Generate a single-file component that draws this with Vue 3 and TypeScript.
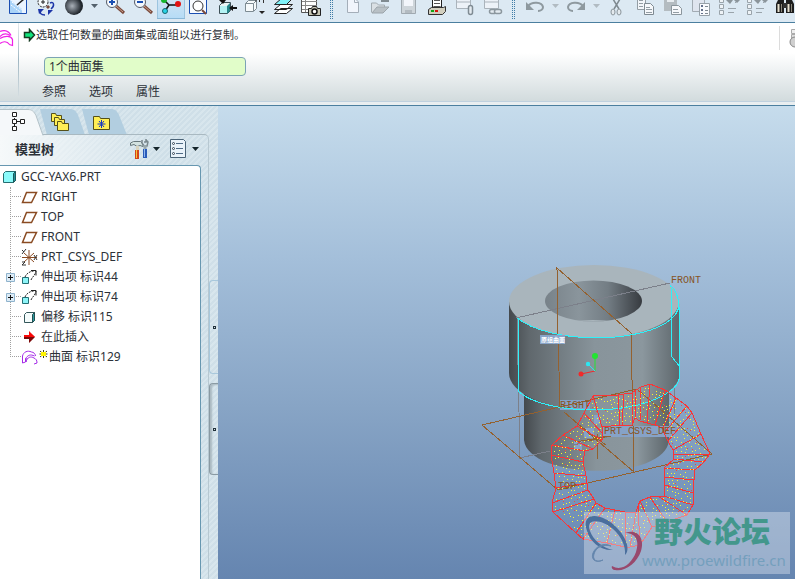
<script setup lang="ts">
import { ref } from 'vue'

type Kind = 'button' | 'arrow' | 'grip'
interface Tool { kind: Kind; label?: string; art?: string; active?: boolean; off?: boolean }

const lens = (x: number) =>
  `<path d="M${x + 4} 6l8 7" stroke="#7a4a3c" stroke-width="3"/><path d="M${x + 4} 6l7 6" stroke="#c9a08c"/><circle cx="${x}" cy="2" r="5.5" fill="#f4f8fc" stroke="#555b66"/>`
const listArt =
  '<g fill="#eef3f7" stroke="#9aa4ab"><path d="M4.500-1.500h4v4h-4zM4.500 4.500h4v4h-4zM4.500 10.500h4v4h-4z"/></g><path d="M13 8.500h8M13 12.500h6M14 3l3-3M20 3l3-3" stroke="#9aa4ab"/><path d="M11 0h7l-3 4zM19 0h6l-3 3z" fill="#8b959b"/>'

const tools: Tool[] = [
  { kind: 'button', label: 'Sketch', art: '<path d="M5.500-4V13.500h17V-4" fill="#eaf4ff" stroke="#1b4fb2"/><path d="M6 0l12 9v4H6z" fill="#a9d3f8"/><path d="M7 5l9 7M8 2l10 8" stroke="#fff" stroke-dasharray="2 1"/><path d="M13 5l7-6" stroke="#222" stroke-width="1.500"/>' },
  { kind: 'button', label: 'Spin', art: '<circle cx="11" cy="2" r="5" fill="#f6fafc" stroke="#222" stroke-dasharray="2 1"/><path d="M15 6l2 2" stroke="#7a4a3c" stroke-width="3"/><path d="M18 3c4-2 5 3 1 6M9 10c-2 3 0 5 4 5" fill="none" stroke="#1d35a8" stroke-width="1.500"/><path d="M16 10h5l-5 5zM6 9h6l-5 5z" fill="#1d35a8"/><path d="M11 0v4M9 2h4" stroke="#222"/>' },
  { kind: 'button', label: 'Shading', art: '<defs><radialGradient id="ball" cx=".4" cy=".5"><stop offset="0" stop-color="#aab1b9"/><stop offset=".5" stop-color="#666d75"/><stop offset="1" stop-color="#22282e"/></radialGradient></defs><circle cx="14" cy="6" r="9" fill="url(#ball)"/>' },
  { kind: 'arrow', label: 'Shading options' },
  { kind: 'button', label: 'Zoom in', art: lens(11) + '<path d="M8 2h6M11-1v6" stroke="#1b4fb2" stroke-width="2"/>' },
  { kind: 'button', label: 'Zoom out', art: lens(11) + '<path d="M8 2h6" stroke="#1b4fb2" stroke-width="2"/>' },
  { kind: 'button', label: 'Datum display', active: true, art: '<path d="M7 0l5 5h9M12 5l-4 6" fill="none" stroke="#111" stroke-width="1.500"/><circle cx="7" cy="0" r="3" fill="#16b52b"/><circle cx="21" cy="4" r="3" fill="#e31212"/><circle cx="8" cy="11" r="2.500" fill="#28d3e6" stroke="#17646e"/>' },
  { kind: 'button', label: 'Refit', art: '<path d="M4.500-4V13.500h17V-4" fill="#f8fbff" stroke="#1b4fb2"/><path d="M17 10l4 4" stroke="#7a4a3c" stroke-width="2"/><circle cx="13" cy="6" r="5" fill="#fff" stroke="#333"/>' },
  { kind: 'button', label: 'Reorient', art: '<path d="M6.500 5.500l3-3h8v8l-3 3h-8z" fill="#e9f6f6" stroke="#3d5057"/><path d="M7 6h7v7H7z" fill="#b4f3f4"/><path d="M14 6v8l3-3V3z" fill="#25878b"/><path d="M24 8h-6M9 1V-3" stroke="#111" stroke-width="2"/><path d="M16 8l4-3v6zM6 0h7l-3 4z" fill="#111"/>' },
  { kind: 'button', label: 'Saved views', art: '<path d="M4.500 11.500v-8l3-3h8v8l-3 3z" fill="#f6fafb" stroke="#7d8b92"/><path d="M12.500 11V3.500h-8M12.500 3.500l3-3" stroke="#7d8b92"/><path d="M15 1.500V-1M18.500 2v-4M22.500 3v-4" stroke="#333"/><path d="M18 11h6l-3 3z" fill="#222"/>' },
  { kind: 'button', label: 'Layers', art: '<path d="M5.500 13.500l6-5h12l-6 5zM5.500 9.500l6-5h12l-6 5z" fill="#fff" stroke="#222"/><path d="M5.500 4.500l7-6h11l-6 6z" fill="#80f4fb" stroke="#222"/>' },
  { kind: 'button', label: 'View manager', art: '<path d="M4.500-4V12.500h15V-4" fill="#fff" stroke="#555"/><path d="M5 1.500h15M5 5.500h15M5 9.500h15M8.500-2v14" stroke="#888"/><path d="M11.500 8.500h3l1-2h4l1 2h3v7h-12z" fill="#c7c6b4" stroke="#222"/><circle cx="17.500" cy="11.500" r="2.500" fill="#fff" stroke="#111" stroke-width="1.500"/>' },
  { kind: 'grip' },
  { kind: 'button', label: 'New', off: true, art: '<path d="M8.500-4V12.500h11V2l-4-4z" fill="#f1f5fc" stroke="#a4aeb9"/><path d="M15.500-1v3.500h4" fill="none" stroke="#a4aeb9"/>' },
  { kind: 'button', label: 'Open', off: true, art: '<path d="M4.500 12.500V3h5l2 2h6v3" fill="#dae0e4" stroke="#a2abb1"/><path d="M5 13l5-6h12l-6 6z" fill="#b8c0c5" stroke="#9ca5ab"/><path d="M14 1h7v-4" fill="none" stroke="#7f8a90" stroke-width="2"/>' },
  { kind: 'button', label: 'Save', off: true, art: '<path d="M6.500-4V13.500h14V-4" fill="#ced5da" stroke="#a0a9b0"/><path d="M9-2h9v8H9z" fill="#f3f6fb"/><path d="M10 10h7v3h-7z" fill="#b3bbc1"/>' },
  { kind: 'button', label: 'Print', art: '<path d="M9.500-3V7h9V-3" fill="#fff" stroke="#222"/><path d="M11 .5h6M11 3.500h6M11 6.500h6" stroke="#555"/><path d="M5.500 9.500l3-2h12l2-1v5l-3 3h-14z" fill="#d2cfbf" stroke="#333"/><path d="M8 10h3v2H8z" fill="#13a413"/><path d="M12 10h3v2h-3z" fill="#d3150e"/>' },
  { kind: 'button', label: 'Attach', off: true, art: '<path d="M5.500-3V8.500h14V-3M6 2h13" fill="#edf2f8" stroke="#aab3bb"/><rect x="17.500" y="5.500" width="4" height="9" rx="2" fill="#e4ebf0" stroke="#7f8b93" stroke-width="1.500"/>' },
  { kind: 'button', label: 'Link', off: true, art: '<path d="M5.500-3V8.500h14V-3M6 2h13" fill="#edf2f8" stroke="#aab3bb"/><g fill="#e4ebf0" stroke="#8c979e" stroke-width="1.500"><rect x="10.500" y="9.500" width="7" height="4" rx="2"/><rect x="15.500" y="9.500" width="7" height="4" rx="2"/></g>' },
  { kind: 'grip' },
  { kind: 'button', label: 'Undo', off: true, art: '<path d="M7 6c4-5 14-4 15 1 0 2-2 4-5 4" fill="none" stroke="#8e999f" stroke-width="2"/><path d="M5 2v8h8z" fill="#8e999f"/>' },
  { kind: 'arrow', label: 'Undo list', off: true },
  { kind: 'button', label: 'Redo', off: true, art: '<path d="M21 6C17 1 7 2 6 7c0 2 2 4 5 4" fill="none" stroke="#8e999f" stroke-width="2"/><path d="M23 2v8h-8z" fill="#8e999f"/>' },
  { kind: 'arrow', label: 'Redo list', off: true },
  { kind: 'button', label: 'Cut', off: true, art: '<path d="M10-1l6 10M17-1l-6 10" stroke="#7e898f" stroke-width="1.500"/><ellipse cx="10" cy="12" rx="2" ry="3" fill="#e4eaee" stroke="#8b959b"/><ellipse cx="16" cy="12" rx="2" ry="3" fill="#e4eaee" stroke="#8b959b"/>' },
  { kind: 'button', label: 'Copy', off: true, art: '<path d="M6.500-3V9.500h8V-3z" fill="#f3f6fa" stroke="#939da4"/><path d="M8 .5h4M8 3.500h4M8 6.500h4" stroke="#939da4"/><path d="M13.500 3.500h6l3 3v8h-9z" fill="#f6f8fb" stroke="#7f8a92"/><path d="M15 7.500h4M15 9.500h6M15 12.500h6" stroke="#939da4"/>' },
  { kind: 'button', label: 'Paste', off: true, art: '<path d="M5-4h13v15H5z" fill="#b4bcc1"/><path d="M8-1h7v3H8z" fill="#e7ecf0"/><path d="M12.500 5.500h7l3 3v6h-10z" fill="#f6f8fb" stroke="#8b969d"/><path d="M14 9.500h5M14 12.500h6" stroke="#939da4"/>' },
  { kind: 'button', label: 'Paste special', off: true, art: '<path d="M5.500-4v15.500h12V-4z" fill="#dfe5ef" stroke="#a2abb3"/><path d="M12.500 3.500h10v12h-10z" fill="#f8fafd" stroke="#96a0a8"/><path d="M14 5h2v2h-2zM14 9h2v2h-2zM14 13h2v1h-2z" fill="#63708b"/><path d="M18 6.500h3M18 10.500h3M18 13.500h3" stroke="#7f8a92"/>' },
  { kind: 'button', label: 'Regenerate', off: true, art: listArt },
  { kind: 'button', label: 'Regenerate manager', off: true, art: listArt },
  { kind: 'button', label: 'Find', art: '<path d="M5 4l3-6h5v15H5zM15-2h5l3 6v9h-8z" fill="#1e1e1e"/><path d="M12 3h4v5h-4z" fill="#333"/><path d="M7.500 4v8M17.500 4v8" stroke="#e7e1cf" stroke-width="2"/><path d="M10.500 4v8M20.500 4v8" stroke="#8b877a"/>' },
]

const iconArt: Record<string, string> = {
  plane: '<path d="M5.500 3.500h10l-5 10h-9z" fill="none" stroke="#8a4b22" stroke-width="1.500"/>',
  csys: '<path d="M8 1v15M1 8.500h15M3 4l10 9M13 4L3 13" stroke="#8a4b22"/><path d="M1 1l2 2M5 0L1 5M1 13h3l-3 3h4M13 6l3 5M16 6l-3 5" stroke="#333" fill="none"/>',
  extrude: '<path d="M4 8c1-3 5-6 9-6M10 11c1-3 4-4 5-9" fill="none" stroke="#222" stroke-dasharray="2 1"/><path d="M10 1.500h5v5" fill="none" stroke="#222"/><path d="M1.500 8.500h6v6h-6z" fill="#8df4f7" stroke="#246f74"/>',
  offset: '<path d="M3.500 5.500l2-2h8v8l-2 2h-8z" fill="#f4fbfb" stroke="#34575a"/><path d="M11.500 5.500v8l2-2v-8z" fill="#2c9b9f" stroke="#234e50"/>',
  insert: '<path d="M3 7h5V3l6 5-6 6v-4H3z" fill="#7c0808"/><path d="M3 6h5V2l6 6H3z" fill="#fa0808"/>',
  surface: '<path d="M1.500 14V7c1-4 5-6 9-4 2 0 4 2 4 4M5 13C6 8 10 7 13 9c2 1 3 2 3 5l-3 1M1.500 14l3-1v-3c2-4 5-5 9-3M5 13V9" fill="none" stroke="#a52ae8"/>',
}

interface Node { name: string; icon: string; expand?: boolean; fresh?: boolean }
const nodes: Node[] = [
  { name: 'RIGHT', icon: 'plane' },
  { name: 'TOP', icon: 'plane' },
  { name: 'FRONT', icon: 'plane' },
  { name: 'PRT_CSYS_DEF', icon: 'csys' },
  { name: '伸出项 标识44', icon: 'extrude', expand: true },
  { name: '伸出项 标识74', icon: 'extrude', expand: true },
  { name: '偏移 标识115', icon: 'offset' },
  { name: '在此插入', icon: 'insert' },
  { name: '曲面 标识129', icon: 'surface', fresh: true },
]

const picked = ref('1个曲面集')

// Each entry joins a point of the outer contour to one of the inner contour.
const ribs: [number, number, number, number][] = [
  [593, 396, 602, 427], [618, 395, 620, 425], [624, 394, 622, 425],
  [632, 393, 632, 425], [636, 390, 635, 418], [641, 387, 640, 421], [650, 384, 647, 423],
  [665, 390, 655, 425], [676, 398, 663, 428], [687, 406, 664, 433],
  [692, 413, 668, 441], [701, 434, 673, 450], [710, 454, 673, 454], [704, 462, 674, 459],
  [695, 470, 664, 468], [694, 480, 664, 477], [693, 493, 665, 485], [693, 505, 664, 496],
  [687, 515, 658, 496], [667, 522, 650, 497], [652, 527, 640, 501], [640, 545, 638, 506],
  [630, 547, 636, 512], [625, 547, 625, 512], [607, 543, 615, 510], [583, 539, 605, 508],
  [576, 533, 596, 503], [553, 512, 594, 499], [552, 503, 588, 490], [556, 488, 587, 483],
  [554, 473, 586, 476], [551, 455, 583, 462], [552, 445, 585, 451], [563, 435, 593, 449],
  [577, 426, 602, 440], [584, 413, 602, 433],
]
const outer = ribs.map((r) => `${r[0]},${r[1]}`).join(' ')
const inner = ribs.map((r) => `${r[2]},${r[3]}`).join(' ')
const ribPath = ribs.map((r) => `M${r[0]} ${r[1]}L${r[2]} ${r[3]}`).join('')

// Scatters points over every panel of the band, keeping them a few units apart.
function speckle(step: number, gap: number, seed: number): string {
  let s = seed
  const rnd = () => (s = (s * 16807) % 2147483647) / 2147483647
  const kept: [number, number][] = []
  ribs.forEach((a, i) => {
    const b = ribs[(i + 1) % ribs.length]
    const px = [a[0], b[0], b[2], a[2]]
    const py = [a[1], b[1], b[3], a[3]]
    let area = 0
    for (let k = 0; k < 4; k++) area += px[k] * py[(k + 1) % 4] - px[(k + 1) % 4] * py[k]
    const n = Math.round(Math.abs(area) / 2 / step)
    for (let k = 0; k < n; k++) {
      const u = rnd()
      const v = 0.06 + rnd() * 0.88
      const x = Math.round((a[0] + (b[0] - a[0]) * u) * (1 - v) + (a[2] + (b[2] - a[2]) * u) * v)
      const y = Math.round((a[1] + (b[1] - a[1]) * u) * (1 - v) + (a[3] + (b[3] - a[3]) * u) * v)
      if (kept.every((p) => Math.hypot(p[0] - x, p[1] - y) >= gap)) kept.push([x, y])
    }
  })
  return kept.map((p) => `M${p[0]} ${p[1]}h1v1h-1z`).join('')
}
const yellowDots = speckle(9, 3, 4217)
const redDots = speckle(150, 3, 911)
</script>

<template>
  <div class="app">
    <header class="toolbar">
      <template v-for="(t, i) in tools" :key="i">
        <span v-if="t.kind === 'grip'" class="grip"></span>
        <button v-else-if="t.kind === 'arrow'" class="tool drop" :class="{ off: t.off }" :aria-label="t.label">
          <svg width="13" height="22" viewBox="0 0 13 22"><path d="M3 4h7l-3.500 4z" /></svg>
        </button>
        <button v-else class="tool" :class="{ active: t.active }" :aria-label="t.label">
          <svg width="28" height="22" viewBox="0 0 28 22" fill="none" v-html="t.art"></svg>
        </button>
      </template>
    </header>

    <section class="dashboard">
      <div class="feature">
        <svg width="14" height="18" viewBox="0 0 14 18"><path d="M0 1.500c5-2 9 0 11 4M0 8.500c5-3 11-3 12.500 1v6l-3-1C7 11 3 11 0 13.500M0 6.500c3-3 7-3 10-1" fill="none" stroke="#f01ee8" stroke-width="1.200" /></svg>
      </div>
      <div class="options">
        <p class="prompt">
          <svg width="13" height="14" viewBox="0 0 13 14"><path d="M1.500 4.500h5v-3l5 5.500-5 5.500v-3h-5z" fill="#12e47c" stroke="#173c22" stroke-width="1.500" /></svg>
          <span>选取任何数量的曲面集或面组以进行复制。</span>
        </p>
        <input v-model="picked" class="collector" aria-label="曲面集" />
        <nav class="menus">
          <button>参照</button>
          <button>选项</button>
          <button>属性</button>
        </nav>
      </div>
      <div class="actions">
        <svg width="7" height="22" viewBox="0 0 7 22"><path d="M3.500 3.500h5v4h-5z" fill="#eee" stroke="#aaa" /><path d="M3.500 8.500h5v5h-5z" fill="#ddd" stroke="#aaa" /><circle cx="7" cy="16" r="5" fill="#cfcfcf" stroke="#888" /></svg>
      </div>
    </section>

    <main class="work">
      <aside class="navigator">
        <div class="tabs">
          <button class="tab current" aria-label="模型树">
            <svg width="43" height="26" viewBox="0 0 43 26"><path d="M0 0h28c4 0 6 2 8 6l7 20H0z" fill="#f5f8fa" /><path d="M0 .5h28c4 0 6 2 8 6l7 20" fill="none" stroke="#b3c2c9" /><g fill="#fff" stroke="#222"><path d="M14.500 9v8M14 12.500h7" /><path d="M12.500 3.500h4v4h-4zM12.500 10.500h4v4h-4zM12.500 17.500h4v4h-4zM20.500 10.500h4v4h-4z" /></g></svg>
          </button>
          <button class="tab" aria-label="文件夹浏览器">
            <svg width="42" height="26" viewBox="0 0 42 26"><path d="M-3 0h30c4 0 6 2 8 6l7 20H4z" fill="#b2cee0" /><g fill="#ffef55" stroke="#54501a"><path d="M8.500 12.500v-8h4l1 2h5v6z" /><path d="M11.500 16.500v-8h4l1 2h5v6z" /><path d="M14.500 21.500v-9h4l1 2h6v7z" /></g></svg>
          </button>
          <button class="tab" aria-label="收藏夹">
            <svg width="42" height="26" viewBox="0 0 42 26"><path d="M-3 0h29c4 0 6 2 8 6l8 20H4z" fill="#b2cee0" /><path d="M8.500 20.500v-13h6l1 2h9v11z" fill="#ffef55" stroke="#54501a" /><path d="M16.500 11v8M12.500 15h8M14 12l5 6M19 12l-5 6" stroke="#173ac0" /></svg>
          </button>
        </div>
        <div class="panel">
          <div class="heading">
            <h1>模型树</h1>
            <button aria-label="设置">
              <svg width="31" height="22" viewBox="0 0 31 22"><path d="M.5 7.500V5l3-1.500h7L13 6v2.500l-3-1-3 1-3-2z" fill="#d3e2e0" stroke="#67777b" /><path d="M6 8h3v5H6z" fill="#d9d4bf" /><path d="M5 12h4v9H5z" fill="#d4451b" /><path d="M6 12h1v8H6z" fill="#f5c53a" /><path d="M12 2v3l2 3h3l1-4-2-2M16 1v3h-2" fill="none" stroke="#79878d" stroke-width="1.500" /><path d="M15 7v5" stroke="#9aa8ad" stroke-width="3" /><path d="M13 11h4v9h-4z" fill="#295bb9" /><path d="M14 11h1v8h-1z" fill="#8fb5ee" /><path d="M23 9h7l-3.500 4z" fill="#15252b" /></svg>
            </button>
            <button aria-label="显示">
              <svg width="31" height="22" viewBox="0 0 31 22"><path d="M1.500 1.500h13l2 2v16h-15z" fill="#eaf3fa" stroke="#4a6377" /><path d="M7 5.500h7M7 10.500h7M7 15.500h7" stroke="#4f6b86" /><g fill="#fff" stroke="#345"><circle cx="4.500" cy="5.500" r="1" /><circle cx="4.500" cy="10.500" r="1" /><circle cx="4.500" cy="15.500" r="1" /></g><path d="M23 9h7l-3.500 4z" fill="#15252b" /></svg>
            </button>
          </div>
          <div class="tree">
            <div class="root">
              <svg width="15" height="14" viewBox="0 0 15 14"><path d="M1.500 3.500l2-2h10v9l-2 2h-10z" fill="#8bfafa" stroke="#256d70" /><path d="M11.500 3.500v9l2-2v-9z" fill="#238f95" stroke="#1b575a" /></svg>
              <span>GCC-YAX6.PRT</span>
            </div>
            <ul>
              <li v-for="n in nodes" :key="n.name">
                <span class="lead"><button v-if="n.expand" class="plus" aria-label="展开"><svg width="9" height="9" viewBox="0 0 9 9"><path d="M.5.5h8v8h-8z" fill="#dcebf6" stroke="#8fb3cc" /><path d="M2 4.500h5M4.500 2v5" stroke="#111" /></svg></button></span>
                <svg class="glyph" width="17" height="17" viewBox="0 0 17 17" v-html="iconArt[n.icon]"></svg>
                <svg v-if="n.fresh" class="spark" width="9" height="17" viewBox="0 0 9 17"><path d="M4.500 1v8M.5 5h8M1 2l7 6M8 2L1 8" stroke="#3e3e10" /><path d="M2 3h5v4H2z" fill="#fff400" /></svg>
                <span class="name">{{ n.name }}</span>
              </li>
            </ul>
          </div>
        </div>
        <div class="splitter">
          <span class="handle"></span>
          <span class="handle dark"></span>
        </div>
      </aside>

      <div class="viewport">
        <svg class="scene" viewBox="218 106 577 473" preserveAspectRatio="xMaxYMax meet" fill="none">
          <defs>
            <linearGradient id="wall"><stop offset="0" stop-color="#44494d" /><stop offset=".12" stop-color="#60686d" /><stop offset=".5" stop-color="#88949b" /><stop offset=".78" stop-color="#8b979e" /><stop offset="1" stop-color="#5d666b" /></linearGradient>
            <linearGradient id="bore"><stop offset="0" stop-color="#788289" /><stop offset=".35" stop-color="#8a959c" /><stop offset=".65" stop-color="#737d84" /><stop offset="1" stop-color="#373b40" /></linearGradient>
            <clipPath id="hole"><ellipse cx="593.500" cy="301" rx="48.500" ry="20.500" /></clipPath>
          </defs>
          <path d="M524 380V440c4 40 142 42 145 0V380z" fill="url(#wall)" />
          <path d="M509 301V373a85 37 0 0 0 171 0l-1-72z" fill="url(#wall)" />
          <ellipse cx="594" cy="301.500" rx="85" ry="36.500" fill="#a9b5bc" />
          <ellipse cx="593.500" cy="301" rx="48.500" ry="20.500" fill="url(#bore)" />
          <path d="M565 323q28-6 56 0z" fill="#a9b5bc" clip-path="url(#hole)" />

          <path d="M560 400h30v10h-30zM602 426h73v11h-73zM594 415h6v9h-6zM584 428h10v10h-10zM574 441h8v9h-8z" fill="#86a2c7" />
          <g shape-rendering="crispEdges">
            <path d="M516 318l154-35M517 318l3 140 30-7M560 448l51-12M674 385v31" stroke="#7c808a" />
            <g stroke="#94612f">
              <path d="M560 406L558 335 557 268 631 333 634 472 564 412" />
              <path d="M482 425L637 389 712 454 558 490z" />
              <path d="M597 434v25M575 442l36-6M583 428l23 17M588 441l18-5" />
            </g>
            <g stroke="#2df2fa">
              <path d="M518 318l1 74c27 23 119 26 154-3 5-5 7-9 7-15l-1-69c-1-10-4-16-8-19l1 71 8 10" />
              <path d="M517 318c32 25 115 26 149 5 9-6 13-12 13-19" />
            </g>
            <path :d="redDots" fill="#ee4a42" />
            <g stroke="#fa3436" stroke-linejoin="round">
              <path :d="ribPath" />
              <polygon :points="outer" />
              <polygon :points="inner" />
            </g>
            <path :d="yellowDots" fill="#fffa28" />
          </g>

          <g class="datum">
            <text x="671" y="283">FRONT</text>
            <text x="560" y="408">RIGHT</text>
            <text x="604" y="434">PRT_CSYS_DEF</text>
            <text x="558" y="489">TOP</text>
          </g>
          <path d="M540 335h25v9h-25z" fill="#89a5ca" />
          <text class="tip" x="541" y="342">原组曲面</text>
          <path d="M595 371V357" stroke="#22e432" /><path d="M595 371l-14 3" stroke="#f02a2a" /><path d="M595 371l-7-7" stroke="#2ce6f0" />
          <circle cx="595" cy="356" r="3" fill="#22e432" /><circle cx="581" cy="374" r="2.500" fill="#f02a2a" /><circle cx="588" cy="364" r="2.200" fill="#2ce6f0" />

          <path d="M584 512h206v62H584z" fill="#dfe8f0" fill-opacity=".42" />
          <g>
            <path d="M587 531c-7-20 15-18 28-5 11 10 16 24 10 29 1-9-4-19-12-26-12-10-28-11-23 2 3 9 13 17 23 19-12 1-23-8-26-19z" fill="#4a6f9d" />
            <path d="M611 546c-8-2-15 1-17 8-2 6 3 9 9 6-9 4-12-2-10-7 3-7 11-11 18-7z" fill="#5b7fa9" stroke="#6788ae" />
            <path d="M625 533c13-5 20 6 16 18-4 12-16 21-26 19-2 0-4-2-3-4 10 6 20-3 24-14 4-12-1-19-11-19z" fill="#98496d" />
          </g>
          <text class="brand" x="654" y="543">野火论坛</text>
          <text class="site" x="642" y="566">www.proewildfire.cn</text>
        </svg>
      </div>
    </main>
  </div>
</template>

<style>
html,
body,
#app {
  height: 100%;
}
body {
  margin: 0;
  overflow: hidden;
}
</style>

<style scoped>
.app {
  display: flex;
  flex-direction: column;
  height: 100%;
  font: 12px/20px 'Noto Sans', 'Noto Sans CJK SC', sans-serif;
  color: #2c3138;
}
button {
  padding: 0;
  border: 0;
  background: none;
  font: inherit;
  color: inherit;
}
svg {
  display: block;
  flex: none;
}
.toolbar {
  display: flex;
  flex: none;
  height: 22px;
  padding-left: 4px;
  overflow: hidden;
  background: #dce9f3;
  border-bottom: 1px solid #4b7f9f;
}
.tool {
  flex: none;
  height: 22px;
}
.tool.active {
  display: flex;
  align-items: flex-start;
}
.tool.active svg {
  height: 22px;
  background: linear-gradient(#8ab8d8, #8ab8d8) 0 18px / 100% 1px no-repeat,
    linear-gradient(90deg, #9cc4df 1px, transparent 1px 27px, #9cc4df 27px) 0 0 / 100% 18px no-repeat,
    linear-gradient(#cfe3f3, #b6dcf6) 0 0 / 100% 18px no-repeat;
}
.drop svg {
  fill: #54616c;
}
.drop.off svg {
  fill: #b1bbc2;
}
.grip {
  flex: none;
  width: 4px;
  height: 19px;
  margin: 0 5px;
  background: conic-gradient(transparent 75%, #3f7ca6 0) 0 0 / 2px 2px;
}
.dashboard {
  display: flex;
  flex: none;
  height: 78px;
  background: linear-gradient(#fff 30px, #f0f3f4 46px, #d3dcde 77px);
  border-bottom: 1px solid #bfd1df;
  box-shadow: 0 3px #e9eef0, 0 4px #4b7f9f;
  margin-bottom: 4px;
}
.feature {
  width: 18px;
  padding-top: 7px;
  height: 66px;
  border-right: 1px solid;
  border-image: linear-gradient(#e6ecef, #9fb6c2 50%, #d5dee2) 1;
}
.options {
  flex: 1;
  display: flex;
  flex-direction: column;
  align-items: flex-start;
  padding-left: 4px;
}
.prompt {
  display: flex;
  align-items: center;
  flex: none;
  height: 24px;
  margin: 0;
  font-size: 11px;
}
.collector {
  box-sizing: border-box;
  flex: none;
  width: 202px;
  height: 19px;
  margin: 10px 0 0 21px;
  padding: 0 4px;
  border: 1px solid #7ca3b5;
  border-radius: 4px;
  background: #e1fdc9;
  font: inherit;
  color: inherit;
}
.menus {
  display: flex;
  flex: none;
  gap: 23px;
  margin: 8px 0 0 19px;
  line-height: 16px;
}
.actions {
  height: 24px;
  margin-top: 3px;
  padding-left: 8px;
  border-left: 1px solid #dcdcdc;
}
.work {
  display: flex;
  flex: 1;
  min-height: 0;
}
.navigator {
  display: grid;
  grid-template: 29px 1fr / 209px 9px;
  flex: none;
  background: repeating-linear-gradient(135deg, #cfdfe8 0 2px, #d8e6ed 2px 4px);
}
.tabs {
  grid-column: 1 / 3;
  display: flex;
  align-items: flex-end;
}
.tab {
  height: 26px;
}
.tab svg {
  overflow: visible;
}
.tab.current {
  z-index: 1;
}
.panel {
  display: flex;
  flex-direction: column;
  border-top: 1px solid #a9b9c1;
  border-right: 1px solid #b7c8d1;
  border-radius: 0 5px 0 0;
  margin-top: -1px;
  min-width: 0;
}
.heading {
  box-sizing: border-box;
  display: flex;
  align-items: center;
  gap: 8px;
  height: 30px;
  flex: none;
  padding: 0 8px 2px 15px;
  background: linear-gradient(90deg, #f6f9fa, #f6f9fa00 75%);
}
.heading h1 {
  flex: 1;
  margin: 0;
  font: bold 13px/20px 'Noto Sans CJK SC', sans-serif;
}
.tree {
  flex: 1;
  margin-right: 7px;
  border-top: 1px solid #6797b0;
  border-right: 1px solid #6797b0;
  border-radius: 0 4px 0 0;
  background: #fff;
}
.root {
  display: flex;
  align-items: center;
  gap: 4px;
  height: 21px;
  padding-left: 2px;
}
ul {
  margin: 2px 0 0 10px;
  padding: 0;
  list-style: none;
  height: 170px;
  border-left: 1px dotted #a0a0a0;
}
li {
  display: flex;
  align-items: center;
  height: 20px;
  margin-left: -1px;
}
ul li:first-child {
  margin-top: -2px;
}
.lead {
  width: 11px;
  flex: none;
  height: 1px;
  border-top: 1px dotted #a0a0a0;
  display: flex;
  align-items: center;
}
.plus {
  margin-left: -4px;
}
.glyph {
  margin-right: 3px;
}
.spark {
  margin-left: -2px;
}
.name {
  white-space: nowrap;
}
.spark + .name {
  margin-left: 1px;
}
.splitter {
  display: flex;
  flex-direction: column;
  gap: 9px;
  padding-top: 145px;
}
.handle {
  display: grid;
  place-items: center;
  height: 92px;
  border: 1px solid #a8c8dc;
  border-right: 0;
  border-radius: 4px 0 0 4px;
}
.handle.dark {
  height: 90px;
  border-color: #8a9aa3;
  box-shadow: inset 2px 1px 2px #aab9c1;
}
.handle::after {
  content: '';
  width: 1px;
  height: 1px;
  border: 1px solid #22313a;
}
.viewport {
  flex: 1;
  min-width: 0;
  background: linear-gradient(#c6dcec, #a4bfda 32%, #87a4c5 64%, #6585b0);
}
.scene {
  width: 100%;
  height: 100%;
}
.datum {
  fill: #865426;
  font: 10px 'Liberation Mono', monospace;
}
.tip {
  fill: #fff;
  font: bold 6px 'Noto Sans CJK SC', sans-serif;
}
.brand {
  fill: #43978c;
  font: 900 29px 'Noto Sans CJK SC', sans-serif;
}
.site {
  fill: #749fbd;
  font: 15px 'Noto Sans', sans-serif;
}
</style>
